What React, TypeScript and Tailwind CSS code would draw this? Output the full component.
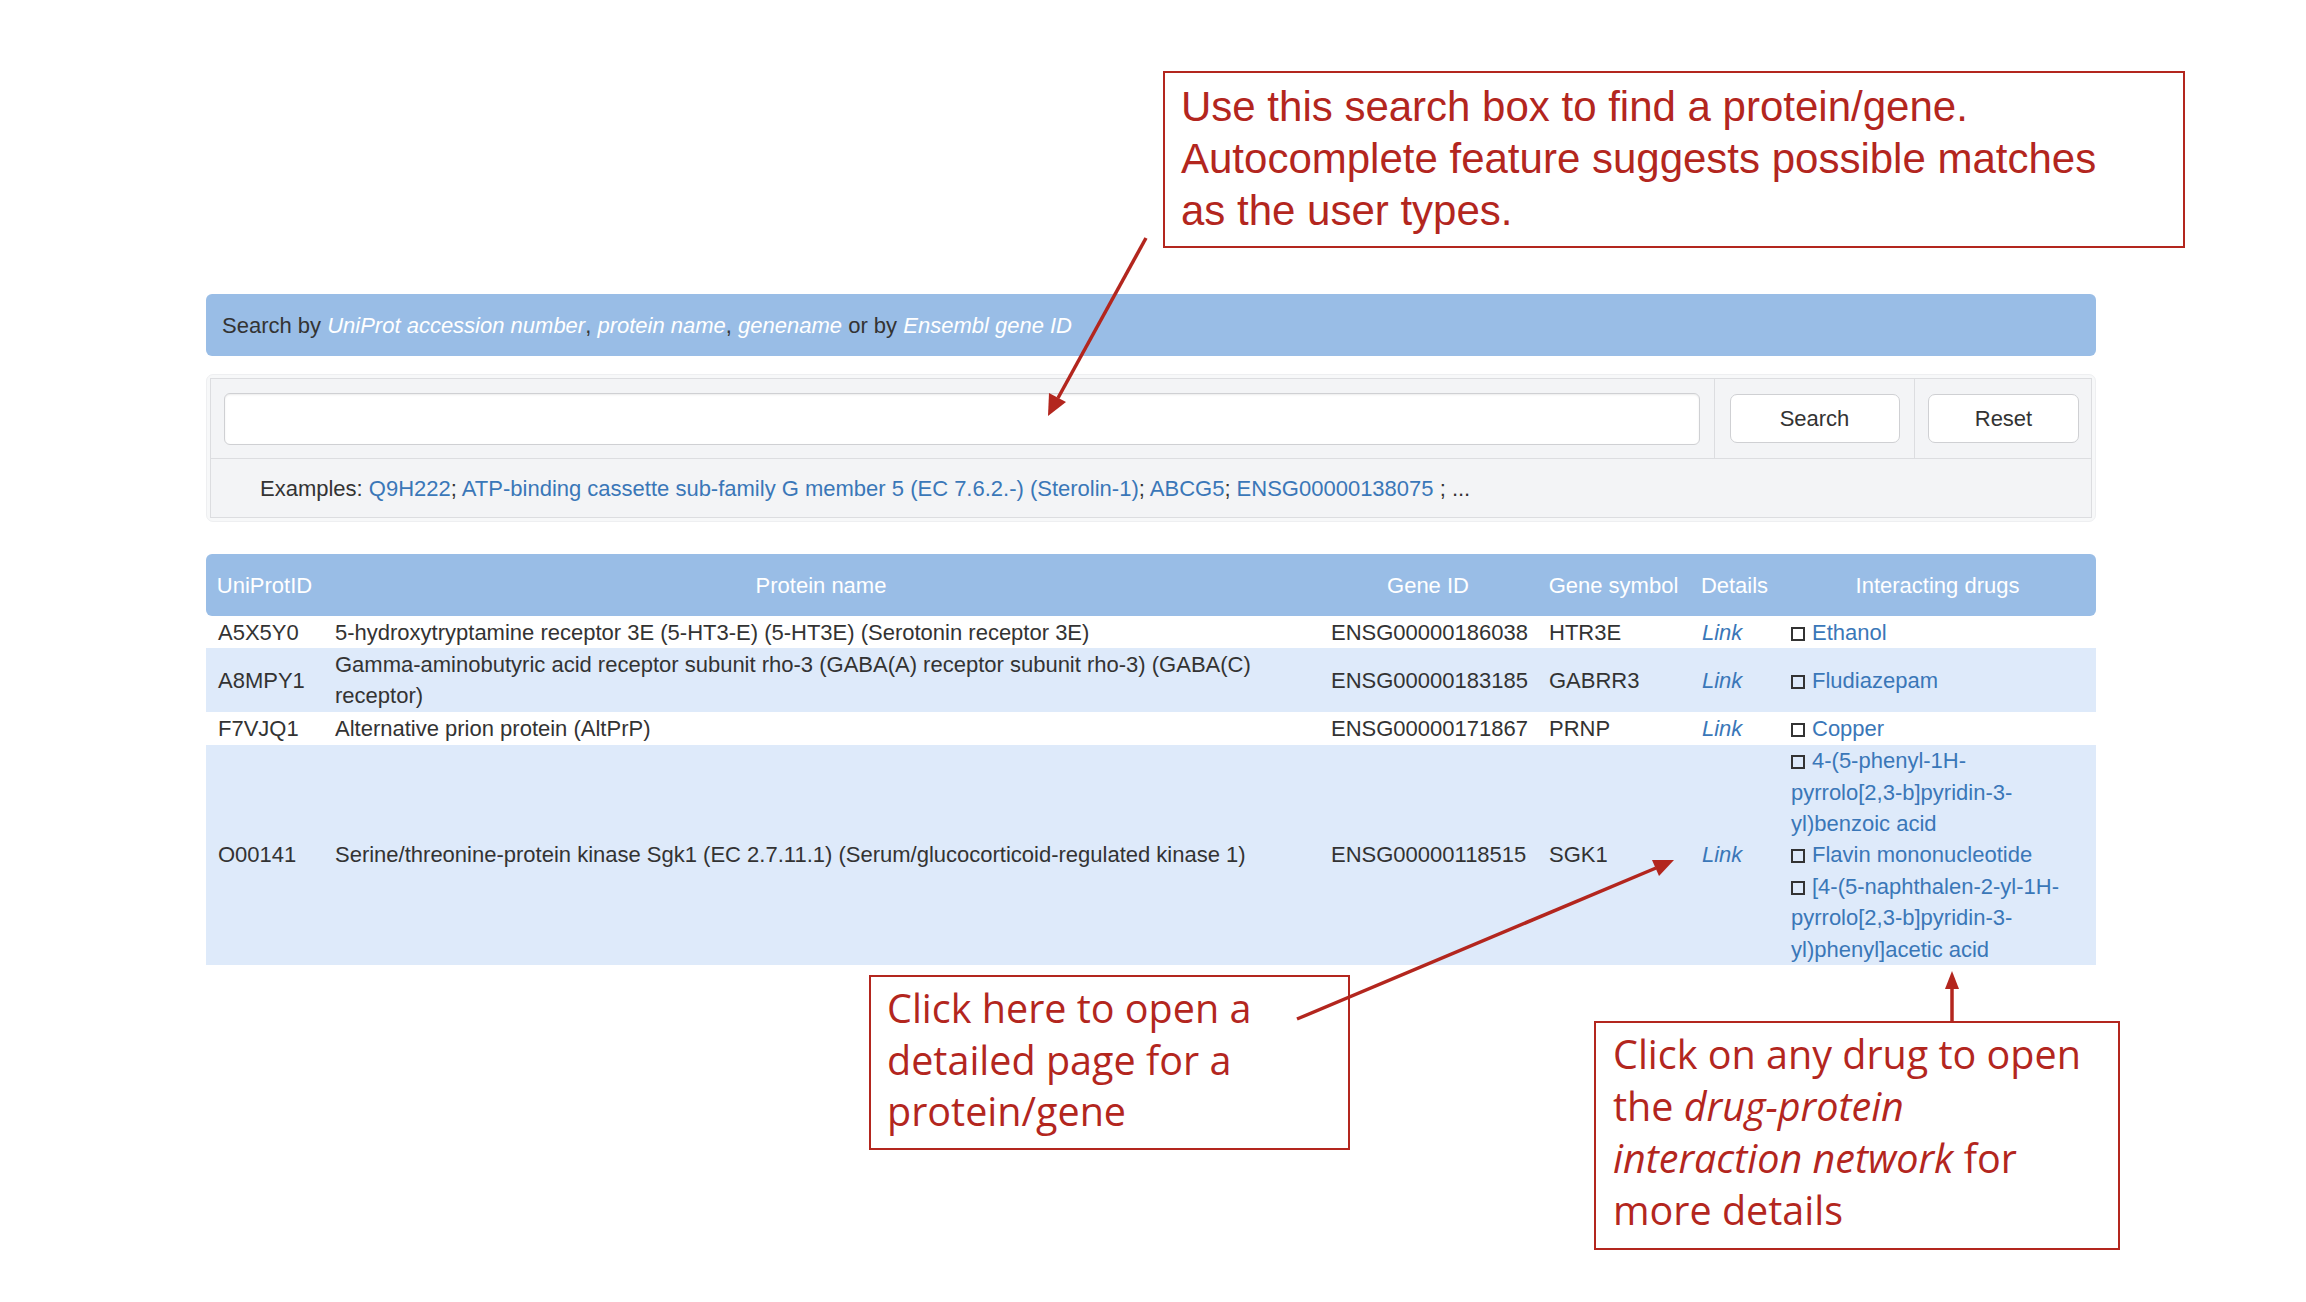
import React from "react";

const cols = "grid grid-cols-[117px_996px_218px_153px_89px_317px]";

function Box() {
  return <span className="inline-block w-[14px] h-[14px] border-2 border-[#333] mr-[7px] align-[-1px]" />;
}

function Drug({ children }: { children: React.ReactNode }) {
  return (
    <div>
      <Box />
      <a className="text-[#3a77b8]">{children}</a>
    </div>
  );
}

type Row = {
  id: string;
  name: React.ReactNode;
  gene: string;
  sym: string;
  drugs: React.ReactNode[];
  stripe: boolean;
};

const rows: Row[] = [
  {
    id: "A5X5Y0",
    name: "5-hydroxytryptamine receptor 3E (5-HT3-E) (5-HT3E) (Serotonin receptor 3E)",
    gene: "ENSG00000186038",
    sym: "HTR3E",
    drugs: ["Ethanol"],
    stripe: false,
  },
  {
    id: "A8MPY1",
    name: (
      <>
        Gamma-aminobutyric acid receptor subunit rho-3 (GABA(A) receptor subunit rho-3) (GABA(C)
        <br />
        receptor)
      </>
    ),
    gene: "ENSG00000183185",
    sym: "GABRR3",
    drugs: ["Fludiazepam"],
    stripe: true,
  },
  {
    id: "F7VJQ1",
    name: "Alternative prion protein (AltPrP)",
    gene: "ENSG00000171867",
    sym: "PRNP",
    drugs: ["Copper"],
    stripe: false,
  },
  {
    id: "O00141",
    name: "Serine/threonine-protein kinase Sgk1 (EC 2.7.11.1) (Serum/glucocorticoid-regulated kinase 1)",
    gene: "ENSG00000118515",
    sym: "SGK1",
    drugs: [
      <>
        4-(5-phenyl-1H-
        <br />
        pyrrolo[2,3-b]pyridin-3-
        <br />
        yl)benzoic acid
      </>,
      "Flavin mononucleotide",
      <>
        [4-(5-naphthalen-2-yl-1H-
        <br />
        pyrrolo[2,3-b]pyridin-3-
        <br />
        yl)phenyl]acetic acid
      </>,
    ],
    stripe: true,
  },
];

export default function App() {
  const red = "#b3261e";
  return (
    <div className="relative w-[2306px] h-[1302px] bg-white overflow-hidden font-['Liberation_Sans',Arial,sans-serif]">
      {/* main page content */}
      <div className="pl-[206px] pt-[294px] text-[22px] text-[#333]">
        <div className="w-[1890px]">
          {/* search header */}
          <div className="h-[62px] rounded-[6px] bg-[#99bde6] flex items-center px-[16px]">
            <span>
              Search by <i className="text-white">UniProt accession number</i>,{" "}
              <i className="text-white">protein name</i>, <i className="text-white">genename</i> or by{" "}
              <i className="text-white">Ensembl gene ID</i>
            </span>
          </div>

          {/* search panel */}
          <div className="mt-[18px] rounded-[7px] bg-[#f7f8f9] border border-[#eeeff1] p-[3px]">
            <div className="border border-[#dcdde0] bg-[#f3f4f6]">
              <div className="flex h-[80px] border-b border-[#dcdde0]">
                <div className="flex-1 flex items-center pl-[13px] pr-[14px] border-r border-[#dcdde0]">
                  <div className="h-[52px] w-full bg-white border border-[#cfd0d3] rounded-[6px] shadow-[inset_0_1px_2px_rgba(0,0,0,0.08)]" />
                </div>
                <div className="w-[200px] flex items-center justify-center border-r border-[#dcdde0]">
                  <button className="w-[170px] h-[49px] rounded-[7px] border border-[#cfd0d3] bg-white text-[22px] text-[#333]">
                    Search
                  </button>
                </div>
                <div className="w-[176px] flex items-center pl-[13px]">
                  <button className="w-[151px] h-[49px] rounded-[7px] border border-[#cfd0d3] bg-white text-[22px] text-[#333]">
                    Reset
                  </button>
                </div>
              </div>
              <div className="h-[58px] flex items-center pl-[49px]">
                <span>
                  Examples: <a className="text-[#3a77b8]">Q9H222</a>;{" "}
                  <a className="text-[#3a77b8]">ATP-binding cassette sub-family G member 5 (EC 7.6.2.-) (Sterolin-1)</a>;{" "}
                  <a className="text-[#3a77b8]">ABCG5</a>; <a className="text-[#3a77b8]">ENSG00000138075</a> ; ...
                </span>
              </div>
            </div>
          </div>

          {/* results table */}
          <div className="mt-[32px]">
            <div className={`${cols} h-[62px] items-center rounded-[6px] bg-[#99bde6] text-white text-center`}>
              <div>UniProtID</div>
              <div>Protein name</div>
              <div>Gene ID</div>
              <div>Gene symbol</div>
              <div>Details</div>
              <div>Interacting drugs</div>
            </div>
            {rows.map((r) => (
              <div
                key={r.id}
                className={`${cols} items-center leading-[31.4px] py-[0.5px] ${r.stripe ? "bg-[#deeafa]" : "bg-white"}`}
              >
                <div className="px-[12px]">{r.id}</div>
                <div className="px-[12px]">{r.name}</div>
                <div className="px-[12px]">{r.gene}</div>
                <div className="px-[12px]">{r.sym}</div>
                <div className="px-[12px]">
                  <a className="italic text-[#3a77b8]">Link</a>
                </div>
                <div className="px-[12px]">
                  {r.drugs.map((d, i) => (
                    <Drug key={i}>{d}</Drug>
                  ))}
                </div>
              </div>
            ))}
          </div>
        </div>
      </div>

      {/* annotation callouts */}
      <div className="absolute left-[1163px] top-[71px] w-[1022px] h-[177px] border-2 border-[#b3261e] bg-white pl-[16px] pt-[8px] text-[42px] leading-[52px] text-[#b3261e] font-['Liberation_Sans',Arial,sans-serif]">
        Use this search box to find a protein/gene.
        <br />
        Autocomplete feature suggests possible matches
        <br />
        as the user types.
      </div>

      <div className="absolute left-[869px] top-[975px] w-[481px] h-[175px] border-2 border-[#b3261e] bg-white pl-[16px] pt-[6px] text-[39.5px] leading-[51.5px] text-[#b3261e] font-['Open_Sans',sans-serif]">
        Click here to open a
        <br />
        detailed page for a
        <br />
        protein/gene
      </div>

      <div className="absolute left-[1594px] top-[1021px] w-[526px] h-[229px] border-2 border-[#b3261e] bg-white pl-[17px] pt-[5px] text-[39.5px] leading-[52px] text-[#b3261e] font-['Open_Sans',sans-serif]">
        Click on any drug to open
        <br />
        the <i>drug-protein</i>
        <br />
        <i>interaction network</i> for
        <br />
        more details
      </div>

      {/* arrows */}
      <svg className="absolute left-0 top-0 pointer-events-none" width="2306" height="1302" viewBox="0 0 2306 1302">
        <g stroke={red} strokeWidth="3.5" fill={red}>
          <line x1="1146" y1="238" x2="1058" y2="398" />
          <polygon points="1048,416 1049,393 1066,402" stroke="none" />
          <line x1="1297" y1="1019" x2="1656" y2="868" />
          <polygon points="1674,860 1659,876 1652,860" stroke="none" />
          <line x1="1952" y1="1021" x2="1952" y2="988" />
          <polygon points="1952,971 1945,989 1959,989" stroke="none" />
        </g>
      </svg>
    </div>
  );
}
